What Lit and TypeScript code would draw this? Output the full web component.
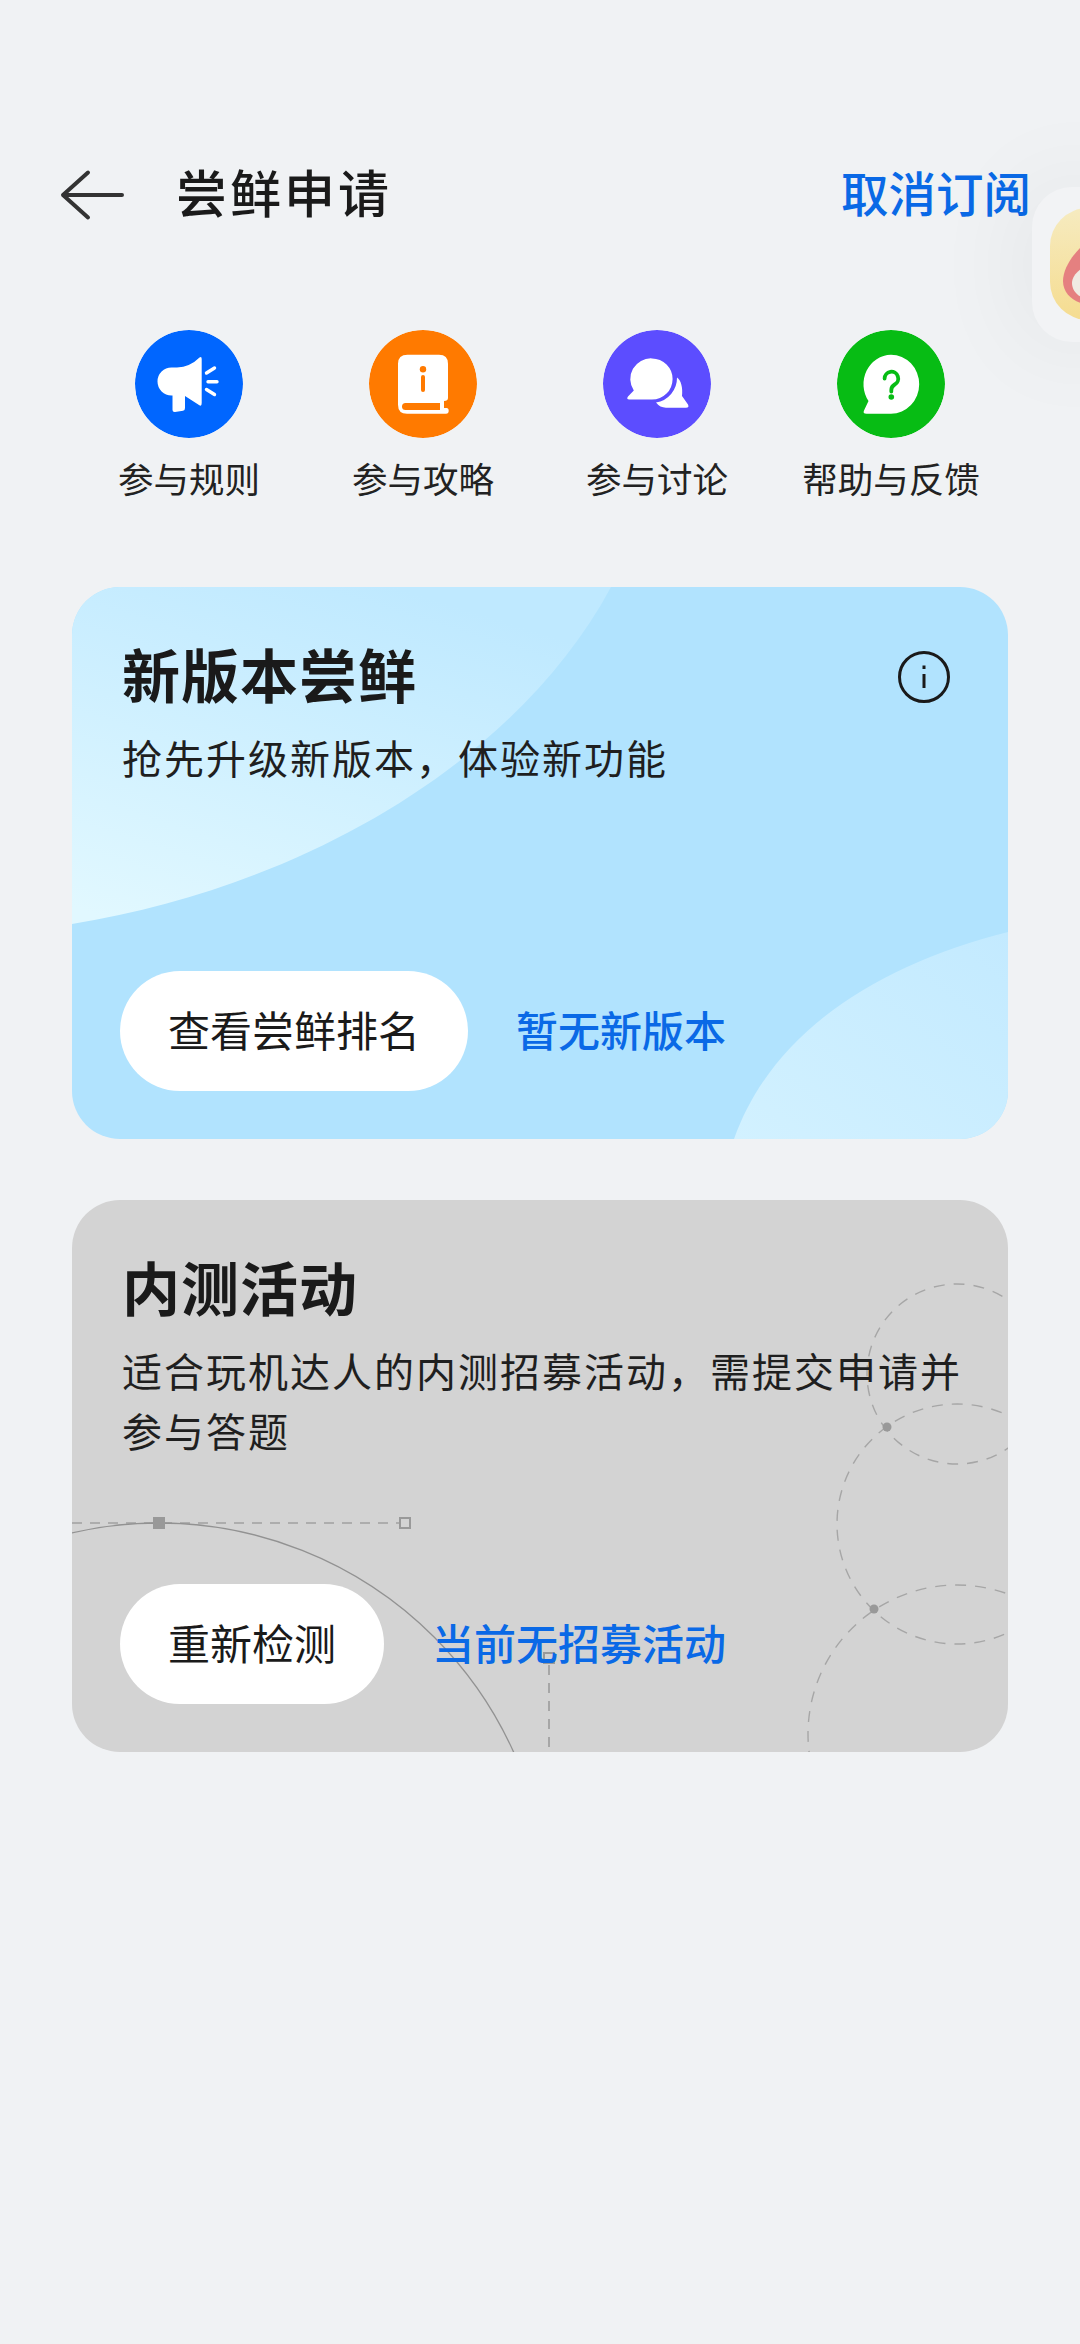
import { LitElement, html, css, svg } from "lit";
import { customElement } from "lit/decorators.js";

const WHITE = "#ffffff";

// Each glyph is drawn on a 108 × 108 canvas, filling the coloured disc.
const megaphone = svg`
  <path fill=${WHITE} d="M64.5 27.5Q66.7 26 66.7 29V73Q66.7 77 64 75L50 66V78Q50 80.5 48 80.8L40 82Q37.5 82.2 37.5 80V65.5H36.5A14 14 0 0 1 36.5 37.5H42Q55 37 64.5 27.5Z"/>
  <path stroke=${WHITE} stroke-width="3.4" stroke-linecap="round" fill="none" d="M71.5 43 79.5 38M73 51.7H82M71.5 59.5 79.5 64.5"/>`;

const book = svg`
  <path fill=${WHITE} d="M38.5 24.7H70Q79 24.7 79 33.7V68Q79 71 75 71V78H77.5Q79.7 78 79.7 80.8Q79.7 83.7 77 83.7H38Q29 83.7 29 74.7V33.7Q29 24.7 38.5 24.7Z"/>
  <path fill="#ff7a00" d="M36.5 73H71V80H36.5A3.5 3.5 0 0 1 36.5 73Z"/>
  <circle cx="54" cy="39.3" r="3.2" fill="#ff7a00"/>
  <path stroke="#ff7a00" stroke-width="4" stroke-linecap="round" d="M54 47V60"/>`;

const discuss = svg`
  <path fill=${WHITE} d="M49 28.4A20.6 20.6 0 0 1 49 69.6H26.3Q23 69.6 25 66.6L30.8 60.5A20.6 20.6 0 0 1 49 28.4Z"/>
  <path fill=${WHITE} d="M74 47.5C78 50 80 58 79 66L85 74.5Q86.5 77.7 83 77.7H63Q57 77.7 53 72.5A25 25 0 0 0 74 47.5Z"/>`;

const askBubble = svg`
  <path fill=${WHITE} d="M54 24.7A28.2 29.5 0 0 1 54 83.7H29.5Q25.5 83.7 27 80.5L31.5 71A28.2 29.5 0 0 1 54 24.7Z"/>
  <path stroke="#07bc14" stroke-width="3.8" stroke-linecap="round" fill="none" d="M47.6 48.5A6.8 6.8 0 1 1 57.7 54.5Q54.3 56.5 54.3 60V61.5"/>
  <circle cx="54.3" cy="67" r="2.8" fill="#07bc14"/>`;

const shortcuts = [
  { label: "参与规则", color: "#0066ff", glyph: megaphone },
  { label: "参与攻略", color: "#ff7a00", glyph: book },
  { label: "参与讨论", color: "#5c4dff", glyph: discuss },
  { label: "帮助与反馈", color: "#07bc14", glyph: askBubble },
];

@customElement("app-root")
export class AppRoot extends LitElement {
  static styles = css`
    :host {
      display: block;
      position: relative;
      width: 1080px;
      min-height: 2344px;
      overflow: hidden;
      background: #f0f2f4;
      color: #1a1a1a;
      font-family: "Noto Sans CJK SC", "Noto Sans", sans-serif;
    }
    .bar {
      display: flex;
      align-items: center;
      height: 80px;
      margin-top: 155px;
      padding: 0 49px 0 59px;
    }
    .back { width: 68px; height: 52px; flex: none; }
    .title {
      margin-left: 49px;
      font-size: 51px;
      font-weight: 500;
      line-height: 72px;
      padding-bottom: 8px;
      letter-spacing: 3px;
      flex: 1;
    }
    .unsubscribe {
      font-size: 47.5px;
      font-weight: 500;
      line-height: 74px;
      padding-bottom: 6px;
      color: #0a69e6;
    }
    .shortcuts {
      display: grid;
      grid-template-columns: repeat(4, 234px);
      margin: 95px 72px 0;
    }
    .shortcut {
      display: flex;
      flex-direction: column;
      align-items: center;
      gap: 16px;
    }
    .disc { width: 108px; height: 108px; border-radius: 50%; display: block; }
    .shortcut span {
      font-size: 35.5px;
      line-height: 48px;
      color: #222;
      white-space: nowrap;
    }
    .card {
      position: relative;
      display: flex;
      flex-direction: column;
      box-sizing: border-box;
      height: 552px;
      margin: 61px 72px 0;
      padding: 56px 30px 48px 48px;
      border-radius: 48px;
      overflow: hidden;
    }
    .card.first { margin-top: 85px; background: #b1e3fe; }
    .card.second { background: #d3d3d3; }
    .art { position: absolute; left: 0; top: 0; width: 936px; height: 552px; }
    .card > h2, .card > p, .card > .actions { position: relative; }
    h2 {
      margin: 0;
      padding-left: 2px;
      font-size: 58px;
      font-weight: 700;
      line-height: 60px;
      letter-spacing: 1px;
    }
    p {
      margin: 24px 0 0;
      padding-left: 2px;
      font-size: 40px;
      line-height: 60px;
      letter-spacing: 2px;
      color: #1f1f1f;
    }
    .actions {
      display: flex;
      align-items: center;
      gap: 48px;
      margin-top: auto;
    }
    .pill {
      display: flex;
      align-items: center;
      box-sizing: border-box;
      height: 120px;
      padding: 0 48px 6px;
      border-radius: 60px;
      background: #fff;
      font-size: 42px;
      color: #1a1a1a;
    }
    .link { font-size: 42px; font-weight: 500; color: #0a69e6; padding-bottom: 6px; }
    .info {
      position: absolute;
      right: 58px;
      top: 64px;
      width: 52px;
      height: 52px;
    }
    .float {
      position: absolute;
      left: 1032px;
      top: 187px;
      width: 90px;
      height: 155px;
      border-radius: 40px;
      background: #f2f3f5;
      box-shadow: 0 0 110px rgba(0, 0, 0, 0.07);
    }
    .float svg { position: absolute; left: 0; top: 0; width: 90px; height: 155px; }
  `;

  private renderFirstArt() {
    return svg`
      <defs>
        <linearGradient id="wash" x1="0.6" y1="0" x2="0.1" y2="1">
          <stop offset="0" stop-color="#bfe9ff"/>
          <stop offset="1" stop-color="#e1f8ff"/>
        </linearGradient>
        <linearGradient id="wash2" x1="0" y1="1" x2="1" y2="0">
          <stop offset="0" stop-color="#d2f1ff"/>
          <stop offset="1" stop-color="#c3eaff"/>
        </linearGradient>
      </defs>
      <path fill="url(#wash)" d="M0 0H539C445 175 230 300 0 337Z"/>
      <path fill="url(#wash2)" d="M662 552C700 445 805 378 936 345V552Z"/>`;
  }

  private renderSecondArt() {
    const dashed = "#a6a6a6";
    return svg`
      <g fill="none" stroke=${dashed} stroke-width="1.4" stroke-dasharray="11 9">
        <circle cx="885" cy="174" r="90"/>
        <circle cx="885" cy="324" r="120"/>
        <circle cx="885" cy="534" r="149"/>
      </g>
      <path d="M0 323H327" fill="none" stroke="#adadad" stroke-width="2" stroke-dasharray="10 8"/>
      <path d="M477 465V552" fill="none" stroke="#a6a6a6" stroke-width="2" stroke-dasharray="10 8"/>
      <circle cx="87" cy="712" r="389" fill="none" stroke="#929292" stroke-width="1.3"/>
      <rect x="81" y="317" width="12" height="12" fill="#999"/>
      <rect x="328" y="318" width="10" height="10" fill="none" stroke="#999" stroke-width="2"/>
      <rect x="472" y="453" width="10" height="10" fill="none" stroke="#999" stroke-width="2"/>
      <circle cx="815" cy="227" r="4.5" fill="#999"/>
      <circle cx="802" cy="409" r="4.5" fill="#999"/>`;
  }

  render() {
    return html`
      <div class="bar">
        <svg class="back" viewBox="0 0 68 52" fill="none" stroke="#333" stroke-width="4" stroke-linecap="round" stroke-linejoin="round">
          <path d="M4 26H63M29 3.5 4 26 29 48.5"/>
        </svg>
        <div class="title">尝鲜申请</div>
        <div class="unsubscribe">取消订阅</div>
      </div>

      <div class="shortcuts">
        ${shortcuts.map(
          (s) => html`
            <div class="shortcut">
              <svg class="disc" viewBox="0 0 108 108">
                <circle cx="54" cy="54" r="54" fill=${s.color}></circle>
                ${s.glyph}
              </svg>
              <span>${s.label}</span>
            </div>
          `
        )}
      </div>

      <section class="card first">
        <svg class="art" viewBox="0 0 936 552">${this.renderFirstArt()}</svg>
        <h2>新版本尝鲜</h2>
        <p>抢先升级新版本，体验新功能</p>
        <svg class="info" viewBox="0 0 52 52" fill="none" stroke="#1a1a1a">
          <circle cx="26" cy="26" r="24.5" stroke-width="3"></circle>
          <path d="M26 23V37" stroke-width="3"></path>
          <path d="M26 14.5V18" stroke-width="3"></path>
        </svg>
        <div class="actions">
          <div class="pill">查看尝鲜排名</div>
          <div class="link">暂无新版本</div>
        </div>
      </section>

      <section class="card second">
        <svg class="art" viewBox="0 0 936 552">${this.renderSecondArt()}</svg>
        <h2>内测活动</h2>
        <p>适合玩机达人的内测招募活动，需提交申请并参与答题</p>
        <div class="actions">
          <div class="pill">重新检测</div>
          <div class="link">当前无招募活动</div>
        </div>
      </section>

      <div class="float">
        <svg viewBox="0 0 90 155">
          <defs>
            <linearGradient id="butter" x1="0" y1="0" x2="0" y2="1">
              <stop offset="0" stop-color="#f6ebc0"/>
              <stop offset="1" stop-color="#f5dc90"/>
            </linearGradient>
          </defs>
          <rect x="18" y="21" width="100" height="112" rx="38" fill="url(#butter)"/>
          <path d="M52 57C40 68 31 82 31 94C31 106 40 114 52 117Z" fill="#e58080"/>
          <path d="M52 80C45 84 40 90 40 96C40 103 45 109 52 111Z" fill="#f0ebe3"/>
        </svg>
      </div>
    `;
  }
}
